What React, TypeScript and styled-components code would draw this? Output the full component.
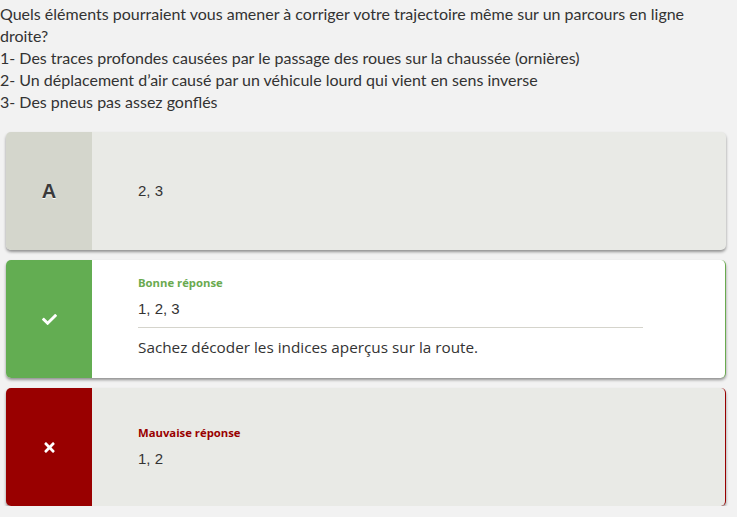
import React from "react";
import styled, { createGlobalStyle } from "styled-components";
import { FaCheck, FaTimes } from "react-icons/fa";

const Global = createGlobalStyle`
  html, body { margin: 0; padding: 0; background: #f2f2f2; }
  body { font-family: "Liberation Sans", Arial, sans-serif; }
`;

const Page = styled.div`
  padding: 3px 0 0 0;
`;

const Question = styled.div`
  font-family: Lato, "Open Sans", sans-serif;
  font-size: 16px;
  line-height: 22px;
  color: #333;
  max-width: 700px;
`;

const List = styled.div`
  display: flex;
  flex-direction: column;
  gap: 10px;
  margin: 19px 11px 0 6px;
`;

type Variant = "neutral" | "good" | "bad";

const leftColors: Record<Variant, string> = {
  neutral: "#d4d6cc",
  good: "#63ad52",
  bad: "#990000",
};
const bgColors: Record<Variant, string> = {
  neutral: "#e9eae6",
  good: "#ffffff",
  bad: "#e9eae6",
};
const edgeColors: Record<Variant, string> = {
  neutral: "transparent",
  good: "#6aaa4f",
  bad: "#990000",
};

const Card = styled.div<{ $v: Variant }>`
  display: flex;
  height: 118px;
  border-radius: 5px;
  overflow: hidden;
  background: ${(p) => bgColors[p.$v]};
  border-right: 1.5px solid ${(p) => edgeColors[p.$v]};
  box-shadow: 0 2px 3px rgba(0, 0, 0, 0.4);
`;

const Side = styled.div<{ $v: Variant }>`
  width: 86px;
  flex: none;
  display: flex;
  align-items: center;
  justify-content: center;
  background: ${(p) => leftColors[p.$v]};
  color: #fff;
`;

const Letter = styled.span`
  font-family: "Liberation Sans", Arial, sans-serif;
  font-size: 20px;
  font-weight: 700;
  color: #3a3a3a;
  text-shadow: 0 1px 0 #fff;
`;

const Body = styled.div`
  flex: 1;
  display: flex;
  flex-direction: column;
  justify-content: center;
  padding-left: 46px;
  padding-right: 82px;
`;

const Label = styled.div<{ $v: Variant }>`
  font-family: "Open Sans", "Noto Sans", sans-serif;
  font-weight: 700;
  font-size: 11.3px;
  line-height: 14px;
  color: ${(p) => (p.$v === "good" ? "#6aaa4f" : "#990000")};
  margin-bottom: 9px;
`;

const Answer = styled.div`
  font-family: "Liberation Sans", Arial, sans-serif;
  font-size: 15px;
  line-height: 20px;
  color: #333;
`;

const Divider = styled.hr`
  border: none;
  border-top: 1px solid #d5d4cc;
  margin: 8px 0 9px 0;
`;

const Explain = styled.div`
  font-family: "Open Sans", "Noto Sans", sans-serif;
  font-size: 15.3px;
  line-height: 20px;
  color: #333;
  margin-bottom: 5px;
`;

export default function App() {
  return (
    <Page>
      <Global />
      <Question>
        <div>Quels éléments pourraient vous amener à corriger votre trajectoire même sur un parcours en ligne droite?</div>
        <div>1- Des traces profondes causées par le passage des roues sur la chaussée (ornières)</div>
        <div>2- Un déplacement d’air causé par un véhicule lourd qui vient en sens inverse</div>
        <div>3- Des pneus pas assez gonflés</div>
      </Question>
      <List>
        <Card $v="neutral">
          <Side $v="neutral">
            <Letter>A</Letter>
          </Side>
          <Body>
            <Answer>2, 3</Answer>
          </Body>
        </Card>
        <Card $v="good">
          <Side $v="good">
            <FaCheck size={15} />
          </Side>
          <Body>
            <Label $v="good">Bonne réponse</Label>
            <Answer>1, 2, 3</Answer>
            <Divider />
            <Explain>Sachez décoder les indices aperçus sur la route.</Explain>
          </Body>
        </Card>
        <Card $v="bad">
          <Side $v="bad">
            <FaTimes size={15} />
          </Side>
          <Body>
            <Label $v="bad">Mauvaise réponse</Label>
            <Answer>1, 2</Answer>
          </Body>
        </Card>
      </List>
    </Page>
  );
}
